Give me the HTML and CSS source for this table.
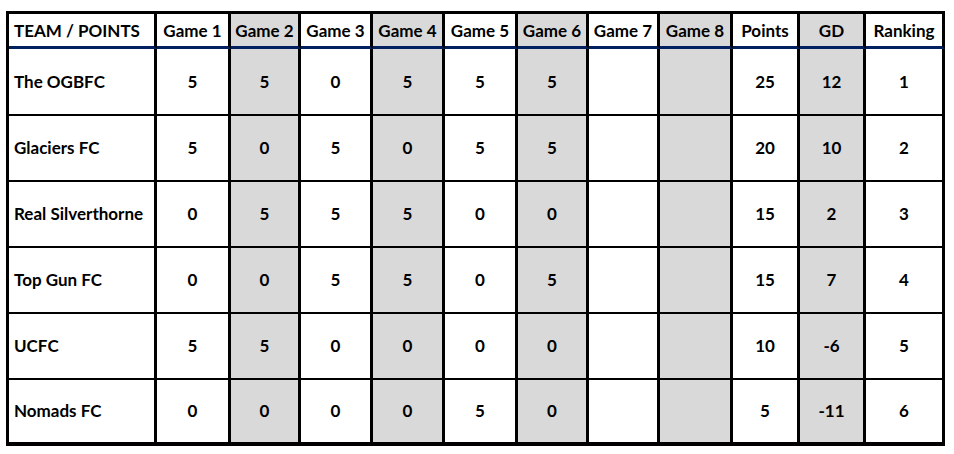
FILE: index.html
```html
<!DOCTYPE html>
<html>
<head>
<meta charset="utf-8">
<link rel="stylesheet" href="styles.css">
</head>
<body>
<table class="standings">
  <colgroup>
    <col class="c-team"><col class="c-g1"><col class="c-g2"><col class="c-g3"><col class="c-g4"><col class="c-g5"><col class="c-g6"><col class="c-g7"><col class="c-g8"><col class="c-pts"><col class="c-gd"><col class="c-rank">
  </colgroup>
  <thead>
    <tr>
      <th class="team">TEAM / POINTS</th>
      <th>Game 1</th><th class="shade">Game 2</th><th>Game 3</th><th class="shade">Game 4</th><th>Game 5</th><th class="shade">Game 6</th><th>Game 7</th><th class="shade">Game 8</th><th>Points</th><th class="shade">GD</th><th>Ranking</th>
    </tr>
  </thead>
  <tbody>
    <tr class="r1"><td class="team">The OGBFC</td><td>5</td><td class="shade">5</td><td>0</td><td class="shade">5</td><td>5</td><td class="shade">5</td><td></td><td class="shade"></td><td>25</td><td class="shade">12</td><td>1</td></tr>
    <tr><td class="team">Glaciers FC</td><td>5</td><td class="shade">0</td><td>5</td><td class="shade">0</td><td>5</td><td class="shade">5</td><td></td><td class="shade"></td><td>20</td><td class="shade">10</td><td>2</td></tr>
    <tr><td class="team">Real Silverthorne</td><td>0</td><td class="shade">5</td><td>5</td><td class="shade">5</td><td>0</td><td class="shade">0</td><td></td><td class="shade"></td><td>15</td><td class="shade">2</td><td>3</td></tr>
    <tr><td class="team">Top Gun FC</td><td>0</td><td class="shade">0</td><td>5</td><td class="shade">5</td><td>0</td><td class="shade">5</td><td></td><td class="shade"></td><td>15</td><td class="shade">7</td><td>4</td></tr>
    <tr><td class="team">UCFC</td><td>5</td><td class="shade">5</td><td>0</td><td class="shade">0</td><td>0</td><td class="shade">0</td><td></td><td class="shade"></td><td>10</td><td class="shade">-6</td><td>5</td></tr>
    <tr class="last"><td class="team">Nomads FC</td><td>0</td><td class="shade">0</td><td>0</td><td class="shade">0</td><td>5</td><td class="shade">0</td><td></td><td class="shade"></td><td>5</td><td class="shade">-11</td><td>6</td></tr>
  </tbody>
</table>
</body>
</html>
```
FILE: styles.css
```css
html, body {
  margin: 0;
  padding: 0;
  background: #ffffff;
}
body {
  padding: 11px 0 0 6px;
  font-family: Lato, "Open Sans", Arial, sans-serif;
  font-weight: 700;
  font-size: 17px;
  color: #000;
}
.standings {
  border-collapse: separate;
  border-spacing: 0;
  table-layout: fixed;
  width: 939px;
  border-top: 3px solid #000;
  border-left: 3px solid #000;
  border-bottom: 4px solid #000;
}
.standings th,
.standings td {
  box-sizing: border-box;
  padding: 0;
  border-right: 3px solid #000;
  text-align: center;
  vertical-align: middle;
  white-space: nowrap;
  font-weight: 700;
  line-height: 20px;
}
.standings th {
  height: 35px;
  border-bottom: 3px solid #002060;
  padding-top: 1px;
}
.standings td {
  height: 66px;
  border-bottom: 2px solid #000;
}
.standings tr.r1 td { height: 67px; }
.standings tr.last td { height: 62px; border-bottom: 0; }
.standings .team {
  text-align: left;
  padding-left: 5px;
}
.shade { background: #d9d9d9; }

.c-team { width: 148px; }
.c-g1 { width: 74px; }
.c-g2 { width: 70px; }
.c-g3 { width: 72px; }
.c-g4 { width: 72px; }
.c-g5 { width: 73px; }
.c-g6 { width: 71px; }
.c-g7 { width: 71px; }
.c-g8 { width: 73px; }
.c-pts { width: 67px; }
.c-gd { width: 66px; }
.c-rank { width: 79px; }
```
